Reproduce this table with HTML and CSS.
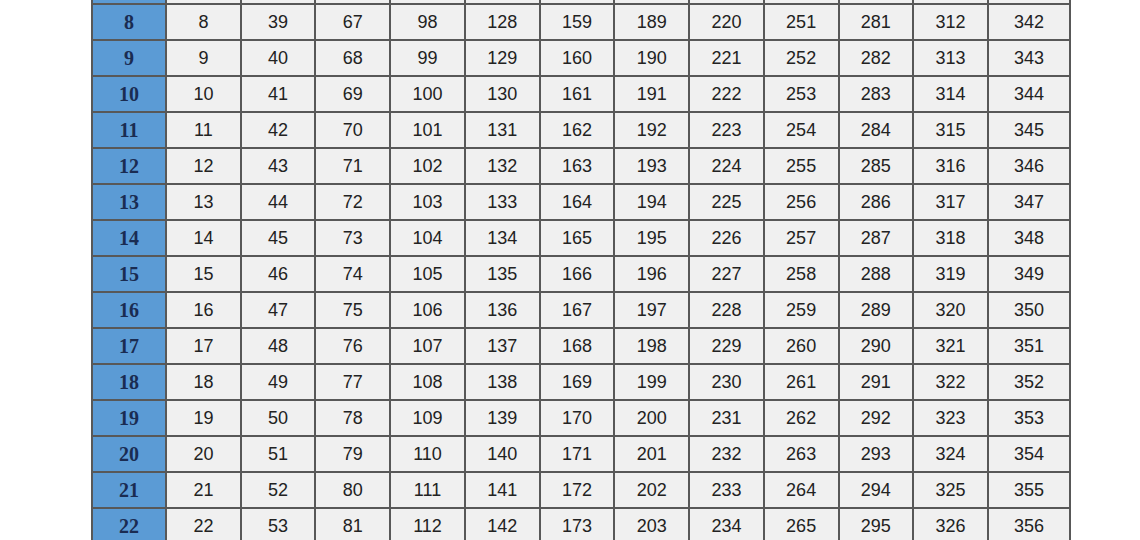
FILE: index.html
```html
<!DOCTYPE html>
<html>
<head>
<meta charset="utf-8">
<link rel="stylesheet" href="styles.css">
</head>
<body>
<table class="doy">
<colgroup>
<col class="c-day"><col class="c-m"><col class="c-m"><col class="c-m"><col class="c-m"><col class="c-m"><col class="c-m"><col class="c-m"><col class="c-m"><col class="c-m"><col class="c-m"><col class="c-m"><col class="c-last">
</colgroup>
<tbody>
<tr class="cut"><th></th><td></td><td></td><td></td><td></td><td></td><td></td><td></td><td></td><td></td><td></td><td></td><td></td></tr>
<tr><th>8</th><td>8</td><td>39</td><td>67</td><td>98</td><td>128</td><td>159</td><td>189</td><td>220</td><td>251</td><td>281</td><td>312</td><td>342</td></tr>
<tr><th>9</th><td>9</td><td>40</td><td>68</td><td>99</td><td>129</td><td>160</td><td>190</td><td>221</td><td>252</td><td>282</td><td>313</td><td>343</td></tr>
<tr><th>10</th><td>10</td><td>41</td><td>69</td><td>100</td><td>130</td><td>161</td><td>191</td><td>222</td><td>253</td><td>283</td><td>314</td><td>344</td></tr>
<tr><th>11</th><td>11</td><td>42</td><td>70</td><td>101</td><td>131</td><td>162</td><td>192</td><td>223</td><td>254</td><td>284</td><td>315</td><td>345</td></tr>
<tr><th>12</th><td>12</td><td>43</td><td>71</td><td>102</td><td>132</td><td>163</td><td>193</td><td>224</td><td>255</td><td>285</td><td>316</td><td>346</td></tr>
<tr><th>13</th><td>13</td><td>44</td><td>72</td><td>103</td><td>133</td><td>164</td><td>194</td><td>225</td><td>256</td><td>286</td><td>317</td><td>347</td></tr>
<tr><th>14</th><td>14</td><td>45</td><td>73</td><td>104</td><td>134</td><td>165</td><td>195</td><td>226</td><td>257</td><td>287</td><td>318</td><td>348</td></tr>
<tr><th>15</th><td>15</td><td>46</td><td>74</td><td>105</td><td>135</td><td>166</td><td>196</td><td>227</td><td>258</td><td>288</td><td>319</td><td>349</td></tr>
<tr><th>16</th><td>16</td><td>47</td><td>75</td><td>106</td><td>136</td><td>167</td><td>197</td><td>228</td><td>259</td><td>289</td><td>320</td><td>350</td></tr>
<tr><th>17</th><td>17</td><td>48</td><td>76</td><td>107</td><td>137</td><td>168</td><td>198</td><td>229</td><td>260</td><td>290</td><td>321</td><td>351</td></tr>
<tr><th>18</th><td>18</td><td>49</td><td>77</td><td>108</td><td>138</td><td>169</td><td>199</td><td>230</td><td>261</td><td>291</td><td>322</td><td>352</td></tr>
<tr><th>19</th><td>19</td><td>50</td><td>78</td><td>109</td><td>139</td><td>170</td><td>200</td><td>231</td><td>262</td><td>292</td><td>323</td><td>353</td></tr>
<tr><th>20</th><td>20</td><td>51</td><td>79</td><td>110</td><td>140</td><td>171</td><td>201</td><td>232</td><td>263</td><td>293</td><td>324</td><td>354</td></tr>
<tr><th>21</th><td>21</td><td>52</td><td>80</td><td>111</td><td>141</td><td>172</td><td>202</td><td>233</td><td>264</td><td>294</td><td>325</td><td>355</td></tr>
<tr><th>22</th><td>22</td><td>53</td><td>81</td><td>112</td><td>142</td><td>173</td><td>203</td><td>234</td><td>265</td><td>295</td><td>326</td><td>356</td></tr>
</tbody>
</table>
</body>
</html>
```
FILE: styles.css
```css
html, body {
  margin: 0;
  padding: 0;
  background: #ffffff;
}

body {
  overflow: hidden;
}

.doy {
  margin: -33px 0 0 91px;
  width: 980px;
  table-layout: fixed;
  border-collapse: collapse;
}

.c-day { width: 74px; }
.c-m { width: 74.7px; }
.c-last { width: 82px; }

.doy tr {
  height: 36px;
}

.doy th,
.doy td {
  border: 2px solid #585858;
  padding: 0;
  text-align: center;
  vertical-align: middle;
}

.doy th {
  background: #5b9bd5;
  color: #1a2c52;
  font-family: "Liberation Serif", "DejaVu Serif", serif;
  font-weight: bold;
  font-size: 20px;
}

.doy td {
  background: #f0f0f0;
  color: #222222;
  font-family: "Liberation Sans", Arial, sans-serif;
  font-size: 18px;
}
```
